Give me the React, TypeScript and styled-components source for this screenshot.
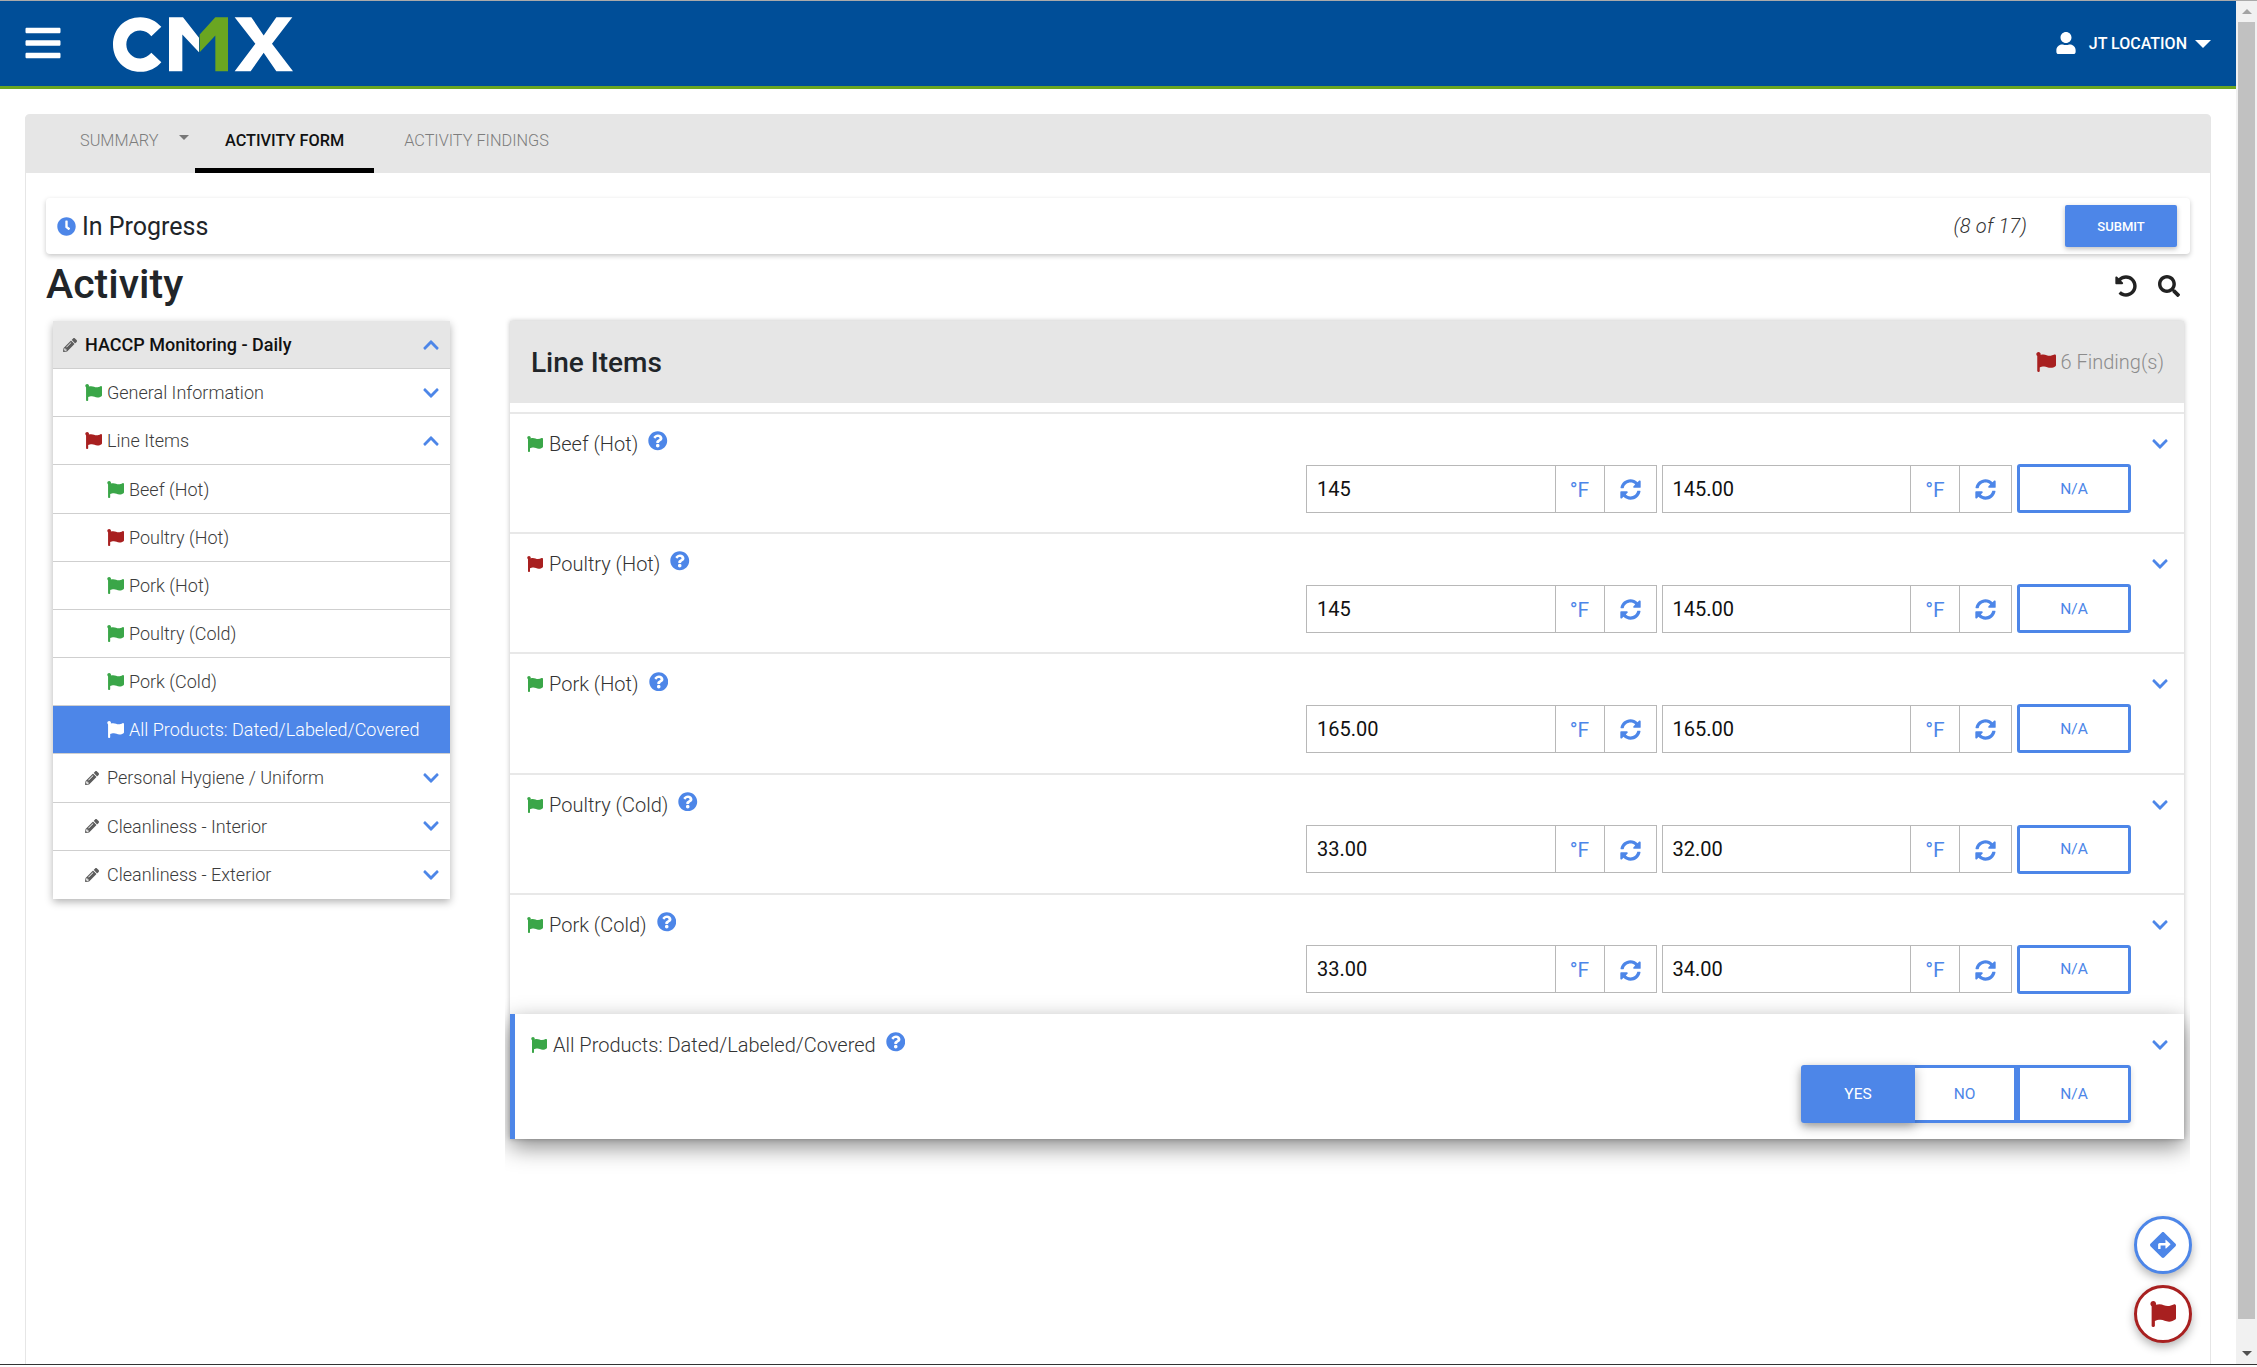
import React from 'react';
import styled, { createGlobalStyle } from 'styled-components';
import {
  FaBars,
  FaChevronDown,
  FaChevronUp,
  FaClock,
  FaDirections,
  FaFlag,
  FaPencilAlt,
  FaQuestionCircle,
  FaSearch,
  FaSyncAlt,
  FaUndoAlt,
  FaUser,
} from 'react-icons/fa';

const BLUE = '#4d86e8';
const GREEN = '#3aa648';
const RED = '#a82020';
const GREY_BAND = '#e6e6e6';

const GlobalStyle = createGlobalStyle`
  html, body {
    margin: 0;
    padding: 0;
    background: #fff;
    font-family: Roboto, "Liberation Sans", sans-serif;
    color: #212529;
    overflow: hidden;
  }
  * { box-sizing: border-box; }
`;

const Page = styled.div`
  display: flex;
  width: 2257px;
  height: 1367px;
  border-top: 1px solid #aaa;
  border-bottom: 2px solid #fff;
  overflow: hidden;
`;

const Main = styled.div`
  position: relative;
  flex: 1;
  display: flex;
  flex-direction: column;
  min-width: 0;
  border-bottom: 1px solid #333;
`;

/* Scrollbar */
const Scrollbar = styled.div`
  width: 21px;
  display: flex;
  flex-direction: column;
  align-items: center;
  background: #f1f1f1;
  border-bottom: 1px solid #333;
`;

const ScrollArrow = styled.div<{ $down?: boolean }>`
  height: 21px;
  width: 100%;
  display: flex;
  align-items: center;
  justify-content: center;
  &::after {
    content: '';
    border-left: 5px solid transparent;
    border-right: 5px solid transparent;
    ${({ $down }) => ($down ? 'border-top: 5px solid #505050;' : 'border-bottom: 5px solid #a3a3a3;')}
  }
`;

const ScrollThumb = styled.div`
  width: 17px;
  height: 1297px;
  background: #c1c1c1;
`;

const ScrollRest = styled.div`
  flex: 1;
`;

/* Top bar */
const TopBar = styled.header`
  height: 88px;
  flex: none;
  background: #004e98;
  border-bottom: 3px solid #6aa621;
  display: flex;
  align-items: center;
  padding: 0 25px;
  color: #fff;
`;

const MenuIcon = styled(FaBars)`
  font-size: 40px;
  margin: -1px 0 0 -2.5px;
`;

const Logo = styled.svg`
  width: 180px;
  height: 55px;
  margin-left: 50.5px;
  margin-top: 1px;
`;

const UserMenu = styled.div`
  margin-left: auto;
  display: flex;
  align-items: center;
  font-size: 16px;
  font-weight: 500;
`;

const UserIcon = styled(FaUser)`
  font-size: 22px;
  margin-right: 12px;
  margin-top: -2px;
`;

const Caret = styled.span<{ $size: number; $color: string }>`
  display: inline-block;
  border-left: ${({ $size }) => $size}px solid transparent;
  border-right: ${({ $size }) => $size}px solid transparent;
  border-top: ${({ $size }) => $size}px solid ${({ $color }) => $color};
`;

const UserCaret = styled(Caret)`
  margin-left: 8px;
`;

/* Card holding the tabs and the form */
const Content = styled.div`
  flex: 1;
  display: flex;
  flex-direction: column;
  min-height: 0;
  margin: 25px 25px 0;
  border-left: 1px solid ${GREY_BAND};
  border-right: 1px solid ${GREY_BAND};
  border-radius: 5px 5px 0 0;
`;

const Tabs = styled.nav`
  height: 59px;
  flex: none;
  display: flex;
  align-items: stretch;
  background: ${GREY_BAND};
  margin: 0 -1px;
  border-radius: 5px 5px 0 0;
`;

const Tab = styled.div<{ $active?: boolean }>`
  display: flex;
  align-items: center;
  padding: 0 30px 2px;
  font-size: 16.3px;
  font-weight: ${({ $active }) => ($active ? 500 : 300)};
  color: ${({ $active }) => ($active ? '#111' : '#7d7d7d')};
  border-bottom: 5px solid ${({ $active }) => ($active ? '#000' : 'transparent')};
`;

const SummaryTab = styled(Tab)`
  width: 170px;
  padding: 0 0 2px 55px;
`;

const SummaryCaret = styled(Caret)`
  margin: -6px 0 0 20px;
`;

const FormBody = styled.div`
  flex: 1;
  min-height: 0;
  padding: 25px 20px 0;
`;

const StatusBar = styled.div`
  height: 56px;
  display: flex;
  align-items: center;
  padding: 0 13px 0 11px;
  border-radius: 4px;
  background: #fff;
  box-shadow: 0 2px 5px rgba(0, 0, 0, 0.22);
`;

const StatusIcon = styled(FaClock)`
  font-size: 19px;
  color: ${BLUE};
  margin-right: 6px;
`;

const StatusText = styled.span`
  font-size: 25px;
  color: #212529;
`;

const Progress = styled.span`
  margin-left: auto;
  margin-right: 38px;
  font-size: 20px;
  font-weight: 300;
  font-style: italic;
  letter-spacing: 0.2px;
  color: #333;
`;

const SubmitButton = styled.button`
  width: 112px;
  height: 42px;
  border: none;
  border-radius: 2px;
  background: ${BLUE};
  color: #fff;
  font-family: inherit;
  font-size: 13px;
  font-weight: 500;
  box-shadow: 0 2px 5px rgba(0, 0, 0, 0.25);
`;

const TitleRow = styled.div`
  height: 67px;
  display: flex;
  align-items: flex-start;
  justify-content: space-between;
  padding: 6px 10px 0 0;
`;

const PageTitle = styled.h1`
  margin: 0;
  font-size: 41px;
  line-height: 48px;
  font-weight: 500;
  color: #212529;
`;

const TitleTools = styled.div`
  display: flex;
  gap: 21px;
  margin-top: 15px;
  font-size: 22px;
  color: #222;
`;

const Columns = styled.div`
  display: flex;
  align-items: flex-start;
`;

/* Left tree */
const Tree = styled.aside`
  width: 397px;
  flex: none;
  margin-left: 7px;
  background: #fff;
  box-shadow: 0 3px 8px rgba(0, 0, 0, 0.3);
`;

const TreeRow = styled.div<{ $depth: number; $active?: boolean; $head?: boolean }>`
  height: 48.17px;
  display: flex;
  align-items: center;
  padding: 0 10px 0 ${({ $depth }) => 10 + $depth * 22}px;
  font-size: 18px;
  font-weight: ${({ $head }) => ($head ? 500 : 300)};
  color: ${({ $head, $active }) => ($active ? '#fff' : $head ? '#111' : '#3c3c3c')};
  background: ${({ $head, $active }) => ($active ? BLUE : $head ? GREY_BAND : '#fff')};
  border-bottom: 1px solid #cfcfcf;
  &:last-child {
    border-bottom: none;
  }
`;

const TreeIconSlot = styled.span`
  width: 22px;
  flex: none;
  display: flex;
  align-items: center;
`;

const TreeFlag = styled(FaFlag)<{ $color: string }>`
  font-size: 17px;
  color: ${({ $color }) => $color};
`;

const TreePencil = styled(FaPencilAlt)`
  font-size: 14px;
  color: #5c5c5c;
`;

const TreeChevronSlot = styled.span`
  margin-left: auto;
  display: flex;
  font-size: 18px;
  color: ${BLUE};
`;

/* Right panel, its wrapper clips the shadow of the selected row */
const PanelClip = styled.div`
  flex: 1;
  min-width: 0;
  overflow: hidden;
  margin: -6px 0 0 55px;
  padding: 6px 6px 40px 5px;
`;

const Panel = styled.section`
  background: #fff;
  box-shadow: 0 0 5px rgba(0, 0, 0, 0.25);
`;

const PanelHead = styled.div`
  height: 82px;
  display: flex;
  align-items: center;
  justify-content: space-between;
  padding: 0 20px 0 21px;
  background: ${GREY_BAND};
  margin-bottom: 9px;
`;

const PanelTitle = styled.h2`
  margin: 0;
  font-size: 28px;
  font-weight: 500;
  color: #212529;
`;

const Findings = styled.div`
  display: flex;
  align-items: center;
  gap: 5px;
  font-size: 20px;
  font-weight: 300;
  color: #8c8c8c;
`;

const FindingsFlag = styled(FaFlag)`
  font-size: 20px;
  color: ${RED};
`;

const ItemRow = styled.div<{ $selected?: boolean }>`
  position: relative;
  height: ${({ $selected }) => ($selected ? 125 : 120.2)}px;
  display: flex;
  flex-direction: column;
  padding: ${({ $selected }) => ($selected ? 16 : 15)}px 15px 0 ${({ $selected }) => ($selected ? 16 : 17)}px;
  border-top: 2px solid #e8e8e8;
  ${({ $selected }) =>
    $selected &&
    `
    border-top: none;
    border-left: 5px solid ${BLUE};
    margin-top: 1px;
    background: #fff;
    box-shadow: 0 8px 22px rgba(0, 0, 0, 0.45);
  `}
`;

const ItemHead = styled.div`
  height: 30px;
  display: flex;
  align-items: center;
`;

const ItemFlag = styled(FaFlag)<{ $color: string }>`
  font-size: 16px;
  margin-right: 6px;
  color: ${({ $color }) => $color};
`;

const ItemName = styled.span`
  font-size: 20px;
  font-weight: 300;
  color: #333;
`;

const HelpIcon = styled(FaQuestionCircle)`
  font-size: 19.5px;
  margin: -6px 0 0 10px;
  color: ${BLUE};
`;

const ItemChevron = styled(FaChevronDown)`
  margin-left: auto;
  font-size: 18px;
  color: ${BLUE};
`;

const ItemControls = styled.div`
  display: flex;
  align-items: center;
  justify-content: flex-end;
  gap: 5px;
  margin: 5px 38px 0 0;
`;

const InputGroup = styled.div`
  display: flex;
  height: 48px;
  width: 350.5px;
  border: 1px solid #b8b8b8;
`;

const ValueInput = styled.input`
  flex: 1;
  min-width: 0;
  border: none;
  outline: none;
  padding: 0 10px;
  font-family: inherit;
  font-size: 20px;
  color: #111;
  background: #fff;
`;

const Addon = styled.span<{ $width: number }>`
  width: ${({ $width }) => $width}px;
  flex: none;
  display: flex;
  align-items: center;
  justify-content: center;
  border-left: 1px solid #b8b8b8;
  padding-top: 2px;
  font-size: 21px;
  color: ${BLUE};
`;

const OutlineButton = styled.button`
  width: 114px;
  height: 49px;
  border: 3px solid ${BLUE};
  border-radius: 3px;
  background: #fff;
  color: ${BLUE};
  font-family: inherit;
  font-size: 15.5px;
  padding: 0;
`;

const Segments = styled.div`
  display: flex;
  height: 58px;
  margin-top: 0.5px;
  border-radius: 3px;
  box-shadow: 0 3px 6px rgba(0, 0, 0, 0.15);
`;

const Segment = styled.button<{ $on?: boolean; $width: number }>`
  width: ${({ $width }) => $width}px;
  border: 3px solid ${BLUE};
  border-left-width: ${({ $on }) => ($on ? 3 : 0)}px;
  background: ${({ $on }) => ($on ? BLUE : '#fff')};
  color: ${({ $on }) => ($on ? '#fff' : BLUE)};
  font-family: inherit;
  font-size: 15.5px;
  padding: 0;
  ${({ $on }) => $on && 'box-shadow: 0 4px 12px rgba(0, 0, 0, 0.3); border-radius: 3px 0 0 3px; position: relative;'}
  &:last-child {
    border-left-width: 3px;
    border-radius: 0 3px 3px 0;
  }
`;

/* Floating buttons */
const Fab = styled.button<{ $color: string; $bottom: number }>`
  position: absolute;
  right: 44px;
  bottom: ${({ $bottom }) => $bottom}px;
  width: 58px;
  height: 58px;
  display: flex;
  align-items: center;
  justify-content: center;
  padding: 0;
  border: 3px solid ${({ $color }) => $color};
  border-radius: 50%;
  background: #fff;
  color: ${({ $color }) => $color};
  font-size: 26px;
  box-shadow: 0 4px 10px rgba(0, 0, 0, 0.3);
`;

type FlagState = 'ok' | 'bad' | 'none';

const tree: { label: string; depth: number; state: FlagState; chevron?: 'up' | 'down'; active?: boolean; head?: boolean }[] = [
  { label: 'HACCP Monitoring - Daily', depth: 0, state: 'none', chevron: 'up', head: true },
  { label: 'General Information', depth: 1, state: 'ok', chevron: 'down' },
  { label: 'Line Items', depth: 1, state: 'bad', chevron: 'up' },
  { label: 'Beef (Hot)', depth: 2, state: 'ok' },
  { label: 'Poultry (Hot)', depth: 2, state: 'bad' },
  { label: 'Pork (Hot)', depth: 2, state: 'ok' },
  { label: 'Poultry (Cold)', depth: 2, state: 'ok' },
  { label: 'Pork (Cold)', depth: 2, state: 'ok' },
  { label: 'All Products: Dated/Labeled/Covered', depth: 2, state: 'ok', active: true },
  { label: 'Personal Hygiene / Uniform', depth: 1, state: 'none', chevron: 'down' },
  { label: 'Cleanliness - Interior', depth: 1, state: 'none', chevron: 'down' },
  { label: 'Cleanliness - Exterior', depth: 1, state: 'none', chevron: 'down' },
];

const lineItems: { name: string; state: FlagState; first: string; second: string }[] = [
  { name: 'Beef (Hot)', state: 'ok', first: '145', second: '145.00' },
  { name: 'Poultry (Hot)', state: 'bad', first: '145', second: '145.00' },
  { name: 'Pork (Hot)', state: 'ok', first: '165.00', second: '165.00' },
  { name: 'Poultry (Cold)', state: 'ok', first: '33.00', second: '32.00' },
  { name: 'Pork (Cold)', state: 'ok', first: '33.00', second: '34.00' },
];

const TempInput: React.FC<{ value: string }> = ({ value }) => (
  <InputGroup>
    <ValueInput readOnly value={value} />
    <Addon $width={49}>°F</Addon>
    <Addon $width={52}>
      <FaSyncAlt />
    </Addon>
  </InputGroup>
);

const App: React.FC = () => (
  <Page>
    <GlobalStyle />
    <Main>
      <TopBar>
        <MenuIcon />
        <Logo viewBox="40 33 540 164">
          <path
            fill="#fff"
            d="M185 62C170 45 148 33 122 33C75 33 40 68 40 115C40 162 75 197 122 197C148 197 170 185 185 168L155 140C146 150 135 157 122 157C98 157 80 138 80 115C80 92 98 73 122 73C135 73 146 80 155 90Z"
          />
          <polygon fill="#fff" points="208,195 208,33 250,33 298,95 298,138 248,85 248,195" />
          <polygon fill="#6aa621" points="300,85 347,33 385,33 385,195 347,195 347,88 300,138" />
          <polygon
            fill="#fff"
            points="405,33 455,33 492,88 530,33 578,33 517,113 580,195 530,195 492,140 453,195 405,195 467,113"
          />
        </Logo>
        <UserMenu>
          <UserIcon />
          JT LOCATION
          <UserCaret $size={8} $color="#fff" />
        </UserMenu>
      </TopBar>

      <Content>
        <Tabs>
          <SummaryTab>
            SUMMARY
            <SummaryCaret $size={5} $color="#777" />
          </SummaryTab>
          <Tab $active>ACTIVITY FORM</Tab>
          <Tab>ACTIVITY FINDINGS</Tab>
        </Tabs>

        <FormBody>
          <StatusBar>
            <StatusIcon />
            <StatusText>In Progress</StatusText>
            <Progress>(8 of 17)</Progress>
            <SubmitButton>SUBMIT</SubmitButton>
          </StatusBar>

          <TitleRow>
            <PageTitle>Activity</PageTitle>
            <TitleTools>
              <FaUndoAlt />
              <FaSearch />
            </TitleTools>
          </TitleRow>

          <Columns>
            <Tree>
              {tree.map((row) => (
                <TreeRow key={row.label} $depth={row.depth} $active={row.active} $head={row.head}>
                  <TreeIconSlot>
                    {row.state === 'none' ? (
                      <TreePencil />
                    ) : (
                      <TreeFlag $color={row.active ? '#fff' : row.state === 'ok' ? GREEN : RED} />
                    )}
                  </TreeIconSlot>
                  {row.label}
                  {row.chevron && (
                    <TreeChevronSlot>{row.chevron === 'up' ? <FaChevronUp /> : <FaChevronDown />}</TreeChevronSlot>
                  )}
                </TreeRow>
              ))}
            </Tree>

            <PanelClip>
              <Panel>
                <PanelHead>
                  <PanelTitle>Line Items</PanelTitle>
                  <Findings>
                    <FindingsFlag />6 Finding(s)
                  </Findings>
                </PanelHead>

                {lineItems.map((item) => (
                  <ItemRow key={item.name}>
                    <ItemHead>
                      <ItemFlag $color={item.state === 'ok' ? GREEN : RED} />
                      <ItemName>{item.name}</ItemName>
                      <HelpIcon />
                      <ItemChevron />
                    </ItemHead>
                    <ItemControls>
                      <TempInput value={item.first} />
                      <TempInput value={item.second} />
                      <OutlineButton>N/A</OutlineButton>
                    </ItemControls>
                  </ItemRow>
                ))}

                <ItemRow $selected>
                  <ItemHead>
                    <ItemFlag $color={GREEN} />
                    <ItemName>All Products: Dated/Labeled/Covered</ItemName>
                    <HelpIcon />
                    <ItemChevron />
                  </ItemHead>
                  <ItemControls>
                    <Segments>
                      <Segment $on $width={114}>YES</Segment>
                      <Segment $width={102}>NO</Segment>
                      <Segment $width={114}>N/A</Segment>
                    </Segments>
                  </ItemControls>
                </ItemRow>
              </Panel>
            </PanelClip>
          </Columns>
        </FormBody>
      </Content>

      <Fab $color={BLUE} $bottom={90}>
        <FaDirections />
      </Fab>
      <Fab $color={RED} $bottom={21}>
        <FaFlag />
      </Fab>
    </Main>

    <Scrollbar>
      <ScrollArrow />
      <ScrollThumb />
      <ScrollRest />
      <ScrollArrow $down />
    </Scrollbar>
  </Page>
);

export default App;
